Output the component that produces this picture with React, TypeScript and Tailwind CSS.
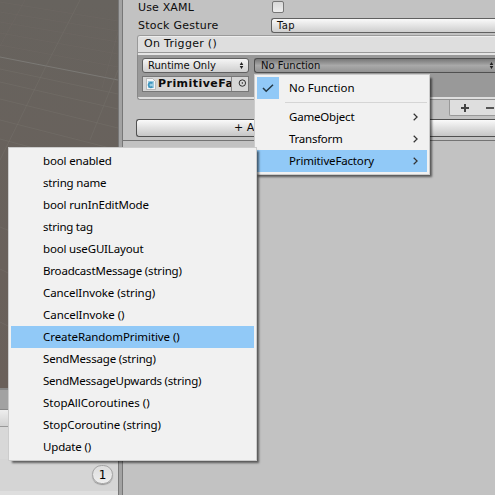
import type { ReactNode } from "react";

const functions: [string, string][] = [
  ["bool enabled", "tracking-[-0.16px]"],
  ["string name", "tracking-[-0.18px]"],
  ["bool runInEditMode", "tracking-[-0.15px]"],
  ["string tag", "tracking-[-0.25px]"],
  ["bool useGUILayout", "tracking-[-0.17px]"],
  ["BroadcastMessage (string)", "tracking-[-0.19px]"],
  ["CancelInvoke (string)", "tracking-[-0.08px]"],
  ["CancelInvoke ()", "tracking-[-0.04px]"],
  ["CreateRandomPrimitive ()", "tracking-[-0.08px]"],
  ["SendMessage (string)", "tracking-[-0.18px]"],
  ["SendMessageUpwards (string)", "tracking-[-0.22px]"],
  ["StopAllCoroutines ()", "tracking-[0px]"],
  ["StopCoroutine (string)", "tracking-[-0.07px]"],
  ["Update ()", "tracking-[-0.17px]"],
];

function Arrows() {
  return (
    <svg className="shrink-0" width="5" height="7" viewBox="0 0 5 7" fill="#222">
      <path d="M2.5 0 4.3 3H.7zM2.5 7 4.3 4H.7z" />
    </svg>
  );
}

function Chevron() {
  return (
    <svg className="mr-[9px] shrink-0" width="5" height="8" viewBox="0 0 5 8" fill="none" stroke="#333" strokeWidth="1.2">
      <path d="M.7.7 4.1 4 .7 7.3" />
    </svg>
  );
}

function Menu({ className, children }: { className: string; children: ReactNode }) {
  return (
    <div
      className={`absolute border border-[#ccc] bg-[#f1f1f1] p-0.5 font-['Noto_Sans','Open_Sans',sans-serif] text-[11.5px] text-black shadow-[3px_3px_2px_-1px_rgba(0,0,0,0.55)] ${className}`}
    >
      {children}
    </div>
  );
}

function SubItem({ label, active, tracking }: { label: string; active?: boolean; tracking: string }) {
  return (
    <div className={`flex h-[22px] items-center justify-between pl-8 ${active ? "bg-[#91c9f7]" : ""}`}>
      <span className={`whitespace-nowrap leading-[22px] ${tracking}`}>{label}</span>
      <Chevron />
    </div>
  );
}

function Scene() {
  return (
    <svg className="block h-[388px] w-[118px] bg-[#69625d]" viewBox="0 0 118 388" fill="none">
      <defs>
        <linearGradient id="ground" x1="0" y1="0" x2="0" y2="1">
          <stop offset="0" stopColor="#67635e" />
          <stop offset="1" stopColor="#6a605a" />
        </linearGradient>
      </defs>
      <path fill="url(#ground)" d="M0 0h118v388H0z" />
      <path stroke="#7b7975" strokeWidth="1" d="M0 57 118 80" />
      <path
        stroke="#77716c"
        strokeWidth=".8"
        strokeOpacity=".6"
        d="M80 0 46 66 0 160M118 70 90 140M0 69l118 25M0 82l118 27M0 99l118 29M0 120l118 30M0 139l60 16M0 227l10 4M0 269l10 5M0 322l10 5"
      />
      <path
        stroke="#77716c"
        strokeWidth=".7"
        strokeOpacity=".35"
        d="M0 2l118 19M0 12l118 19M0 22l118 20M0 33l118 21M0 45l118 22M25 0 0 46M118 32 102 88"
      />
    </svg>
  );
}

function Inspector() {
  return (
    <section className="flex h-full w-[372px] flex-col overflow-hidden bg-[#c2c2c2] text-[11px] text-[#0c0c0c]">
      <div className="flex h-[141px] flex-col border-b border-[#747474] pl-[13px]">
        <div className="flex h-[16px] items-center pl-[2px]">
          <span className="w-[134px] whitespace-nowrap leading-[14px] tracking-[0.15px]">Use XAML</span>
          <span className="mt-[-3px] h-[12px] w-[12px] rounded-[2px] border border-[#777] bg-linear-to-b from-[#d8d8d8] to-[#eee]" />
        </div>
        <div className="flex h-[17px] items-center pl-[2px]">
          <span className="mt-0.5 w-[133px] whitespace-nowrap leading-[14px] tracking-[0.25px]">Stock Gesture</span>
          <div className="mt-0.5 h-[15px] flex-1 rounded-l-[3px] border border-r-0 border-[#606060] bg-linear-to-b from-[#fafafa] to-[#cecece] pl-[5px] text-[10px] leading-[13px] tracking-[0.3px]">
            Tap
          </div>
        </div>
        <div className="ml-px mt-[2px] flex h-[18px] items-center rounded-tl-[3px] border-y border-l border-b-[#999] border-l-[#999] border-t-[#9a9a9a] bg-[#dedede] pl-[6px] shadow-[inset_0_1px_0_#eee]">
          <span className="whitespace-nowrap leading-[14px] tracking-[0.3px]">On Trigger ()</span>
        </div>
        <div className="ml-px h-[2px] border-l border-[#999] bg-[#e5e5e5]" />
        <div className="ml-px flex h-[42px] flex-col gap-[3px] border-l border-[#888] bg-[#999] pl-[4px] pt-[3px]">
          <div className="flex gap-[5px] text-[10px]">
            <div className="flex h-[15px] w-[107px] items-center justify-between rounded-[3px] border border-[#606060] bg-linear-to-b from-[#f5f5f5] to-[#cfcfcf] pl-[5px] pr-1">
              <span className="whitespace-nowrap leading-[13px]">Runtime Only</span>
              <Arrows />
            </div>
            <div className="flex h-[15px] flex-1 items-center justify-between rounded-l-[3px] border border-r-0 border-[#505050] bg-linear-to-b from-[#777] via-[#a9a9a9] to-[#929292] pl-[6px] pr-px">
              <span className="whitespace-nowrap leading-[13px]">No Function</span>
              <Arrows />
            </div>
          </div>
          <div className="flex h-[16px] w-[107px] items-center border border-[#777] bg-[#d6d6d6]">
            <svg className="ml-[3px] shrink-0" width="10" height="12" viewBox="0 0 10 12">
              <path fill="#f4f5f6" stroke="#a6a6a6" strokeWidth=".7" d="M.5.5h6l3 3v8h-9z" />
              <path fill="#9ccbe0" d="M2 3h6v7H2z" />
              <path fill="none" stroke="#3d94bd" strokeWidth="1.6" d="M6.5 5.3a2.3 2.3 0 1 0 0 3.4" />
            </svg>
            <span className="ml-[2px] w-[73px] shrink-0 overflow-hidden whitespace-nowrap text-[11px] font-bold leading-[14px] tracking-[0.45px]">
              PrimitiveFa
            </span>
            <svg className="h-[14px] w-[17px] shrink-0 border-l border-[#888]" viewBox="0 0 17 14" fill="none" stroke="#222">
              <circle cx="11" cy="6" r="3.4" />
              <circle cx="11" cy="6" r=".8" fill="#222" stroke="none" />
            </svg>
          </div>
        </div>
        <div className="ml-px h-[3px] rounded-bl-[3px] border-b border-l border-[#909090] bg-[#dedede]" />
        <div className="ml-auto flex h-[16px] w-[46px] items-center gap-[17px] rounded-bl-[2px] border-b border-l border-[#999] bg-[#dedede] pl-[11px]">
          <svg width="8" height="8" viewBox="0 0 8 8" className="shrink-0" fill="#444">
            <path d="M3 0h2v3h3v2H5v3H3V5H0V3h3z" />
          </svg>
          <svg width="8" height="8" viewBox="0 0 8 8" className="shrink-0" fill="#555">
            <path d="M0 3h8v2H0z" />
          </svg>
        </div>
        <div className="mt-[3px] h-[18px] shrink-0 rounded-l-[3px] border border-r-0 border-[#505050] bg-linear-to-b from-[#fafafa] to-[#c6c6c6] pl-[97px] leading-[16px]">
          <span className="whitespace-nowrap">+ A</span>
        </div>
      </div>
    </section>
  );
}

export default function App() {
  return (
    <main className="relative flex h-[495px] w-[495px] overflow-hidden bg-[#c2c2c2] font-['DejaVu_Sans',Verdana,sans-serif]">
      <aside className="flex w-[118px] shrink-0 flex-col">
        <Scene />
        <div className="h-[21px] border-t-2 border-[#888] bg-[#a2a2a2]" />
        <div className="h-[18px] border-y border-b-[#999] border-t-[#888] bg-linear-to-b from-[#eee] to-[#d2d2d2]" />
        <div className="h-[32px] bg-[#d8d8d8]" />
        <div className="flex h-[32px] items-start justify-end bg-[#d5d5d5] pr-[5px] pt-[6px]">
          <span className="flex h-[19px] w-[21px] items-center justify-center rounded-full border border-[#a5a5a5] bg-linear-to-b from-[#ddd] to-[#eee] text-[12px] leading-none text-black shadow-[0_1px_1px_#999]">
            1
          </span>
        </div>
        <div className="h-[4px] bg-[#dedede]" />
      </aside>
      <div className="w-[5px] shrink-0 border-x border-l-[#777] border-r-[#777] bg-[#a2a2a2]" />
      <Inspector />

      <Menu className="left-[254px] top-[74px] h-[101px] w-[176px]">
        <div className="flex h-[22px]">
          <div className="flex w-[22px] items-center justify-center bg-[#91c9f7]">
            <svg width="12" height="9" viewBox="0 0 12 9" fill="none" stroke="#233845" strokeWidth="1.5">
              <path d="m1 4 3.2 3.3L11 .8" />
            </svg>
          </div>
          <span className="ml-[10px] whitespace-nowrap leading-[22px]">No Function</span>
        </div>
        <div className="mb-[3px] ml-7 mt-[3px] h-px bg-[#d5d5d5]" />
        <SubItem label="GameObject" tracking="tracking-[-0.19px]" />
        <SubItem label="Transform" tracking="tracking-[-0.25px]" />
        <SubItem label="PrimitiveFactory" tracking="tracking-[-0.16px]" active />
      </Menu>

      <Menu className="left-[8px] top-[147px] h-[314px] w-[249px]">
        {functions.map(([name, tracking]) => (
          <div
            key={name}
            className={`h-[22px] whitespace-nowrap pl-8 leading-[22px] ${tracking} ${name.startsWith("CreateRandom") ? "bg-[#91c9f7]" : ""}`}
          >
            {name}
          </div>
        ))}
      </Menu>
    </main>
  );
}
